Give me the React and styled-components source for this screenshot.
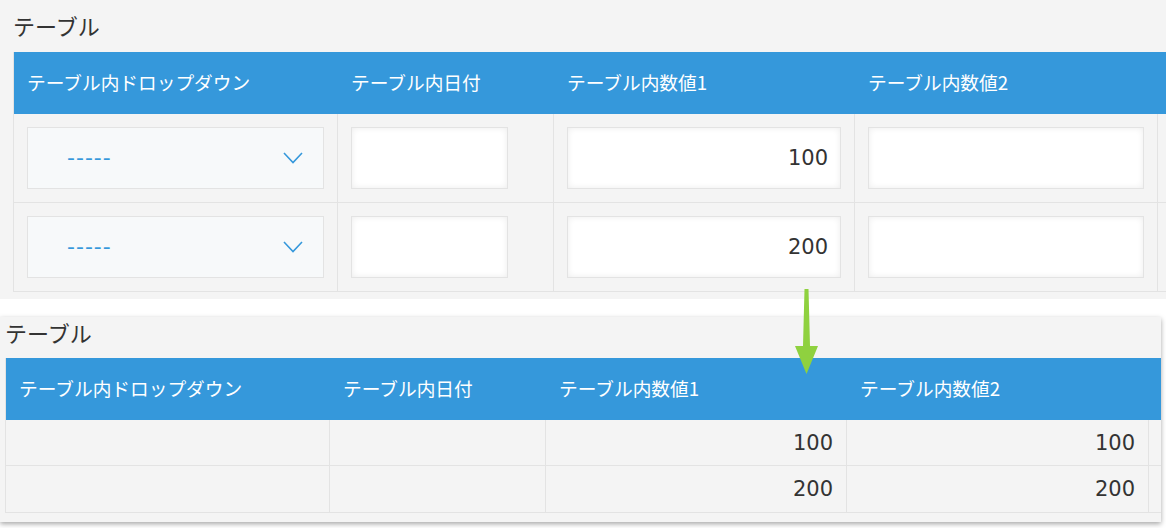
import React from 'react'
import styled, { createGlobalStyle } from 'styled-components'

const GlobalStyle = createGlobalStyle`
  html, body {
    margin: 0;
    padding: 0;
    background: #ffffff;
    font-family: "Noto Sans CJK JP", "Noto Sans", sans-serif;
  }
`

const Page = styled.div`
  position: relative;
  width: 1166px;
  height: 528px;
  overflow: hidden;
`

const Panel = styled.section`
  background: #f4f4f4;
  box-sizing: border-box;
  overflow: hidden;
  width: ${p => p.$width}px;
  height: ${p => p.$height}px;
  padding-left: ${p => p.$pad}px;
  margin-top: ${p => p.$top || 0}px;
  box-shadow: ${p => (p.$shadow ? '0 2px 5px rgba(0, 0, 0, 0.35)' : 'none')};
`

const Title = styled.h2`
  margin: 0;
  height: ${p => p.$height}px;
  padding-top: ${p => p.$padTop}px;
  box-sizing: border-box;
  font-size: 22px;
  font-weight: 400;
  line-height: 30px;
  color: #333;
`

const Grid = styled.div`
  display: grid;
  grid-template-columns: ${p => p.$cols};
  width: max-content;
  border-left: 1px solid #e3e3e3;
`

const HeadCell = styled.div`
  background: #3598db;
  color: #fff;
  height: 62px;
  box-sizing: border-box;
  padding: 0 13px 3px;
  display: flex;
  align-items: center;
  font-size: 18.7px;
  white-space: nowrap;
`

const Cell = styled.div`
  box-sizing: border-box;
  height: ${p => p.$height}px;
  border-right: 1px solid #e3e3e3;
  border-bottom: 1px solid #e3e3e3;
  padding: 0 13px;
  display: flex;
  align-items: center;
  justify-content: ${p => (p.$right ? 'flex-end' : 'flex-start')};
  font-family: "DejaVu Sans", sans-serif;
  font-size: 21px;
  color: #333;
  &:nth-child(5n) {
    border-right: none;
  }
`

const InputBox = styled.div`
  box-sizing: border-box;
  height: 62px;
  width: ${p => (p.$width ? `${p.$width}px` : '100%')};
  background: #fff;
  border: 1px solid #e3e3e3;
  box-shadow: inset 0 0 6px rgba(0, 0, 0, 0.08);
  display: flex;
  align-items: center;
  justify-content: flex-end;
  padding-right: 12px;
  font-family: "DejaVu Sans", sans-serif;
  font-size: 21px;
  color: #333;
`

const Select = styled.div`
  box-sizing: border-box;
  height: 62px;
  width: 100%;
  background: #f7f9fa;
  border: 1px solid #e3e3e3;
  display: flex;
  align-items: center;
  justify-content: space-between;
  padding: 0 20px 0 39px;
`

const Dashes = styled.span`
  color: #3598db;
  font-family: "DejaVu Sans", sans-serif;
  font-size: 22px;
  letter-spacing: 1px;
  margin-top: -2px;
`

const Arrow = styled.svg`
  position: absolute;
  left: 794px;
  top: 289px;
`

const Chevron = () => (
  <svg width="20" height="12" viewBox="0 0 20 12">
    <path d="M1 1 L10 10.5 L19 1" fill="none" stroke="#3598db" strokeWidth="1.6" />
  </svg>
)

const headers = ['テーブル内ドロップダウン', 'テーブル内日付', 'テーブル内数値1', 'テーブル内数値2', '']
const values = ['100', '200']

function EditTable() {
  return (
    <Grid $cols="324px 216px 301px 303px 40px">
      {headers.map((h, i) => <HeadCell key={i}>{h}</HeadCell>)}
      {values.map(v => (
        <React.Fragment key={v}>
          <Cell $height={89}><Select><Dashes>-----</Dashes><Chevron /></Select></Cell>
          <Cell $height={89}><InputBox $width={157} /></Cell>
          <Cell $height={89}><InputBox>{v}</InputBox></Cell>
          <Cell $height={89}><InputBox /></Cell>
          <Cell $height={89} />
        </React.Fragment>
      ))}
    </Grid>
  )
}

function ViewTable() {
  return (
    <Grid $cols="324px 216px 301px 302px 13px">
      {headers.map((h, i) => <HeadCell key={i}>{h}</HeadCell>)}
      {values.map(v => (
        <React.Fragment key={v}>
          <Cell $height={v === '100' ? 46 : 47} />
          <Cell $height={v === '100' ? 46 : 47} />
          <Cell $height={v === '100' ? 46 : 47} $right>{v}</Cell>
          <Cell $height={v === '100' ? 46 : 47} $right>{v}</Cell>
          <Cell $height={v === '100' ? 46 : 47} />
        </React.Fragment>
      ))}
    </Grid>
  )
}

export default function App() {
  return (
    <Page>
      <GlobalStyle />
      <Panel $width={1166} $height={299} $pad={13}>
        <Title $height={52} $padTop={10}>テーブル</Title>
        <EditTable />
      </Panel>
      <Panel $width={1161} $height={205} $pad={5} $top={18} $shadow>
        <Title $height={41} $padTop={0}>テーブル</Title>
        <ViewTable />
      </Panel>
      <Arrow width="26" height="86" viewBox="0 0 26 86">
        <polygon points="10.5,0 14.5,0 16,57 24,57 12.5,85 1,57 9,57" fill="#8fd13f" />
      </Arrow>
    </Page>
  )
}
